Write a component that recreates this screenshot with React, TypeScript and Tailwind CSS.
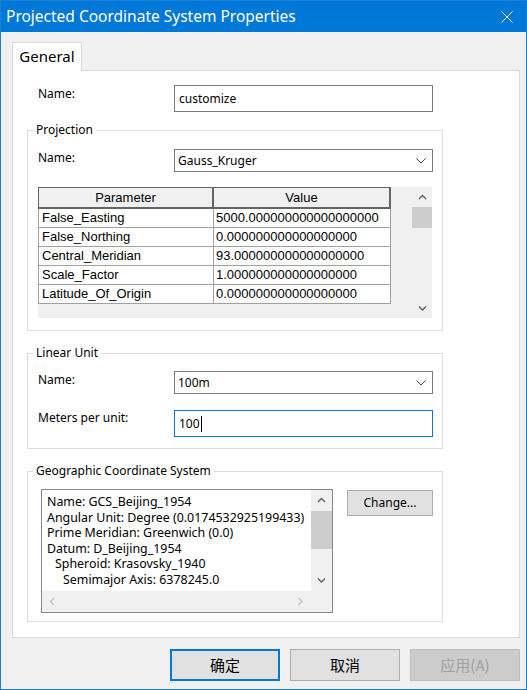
import React from "react";

const ui = "font-['Noto_Sans','Noto_Sans_CJK_SC',sans-serif]";
const arial = "font-['Liberation_Sans',Arial,sans-serif]";

const params = [
  ["False_Easting", "5000.000000000000000000"],
  ["False_Northing", "0.000000000000000000"],
  ["Central_Meridian", "93.000000000000000000"],
  ["Scale_Factor", "1.000000000000000000"],
  ["Latitude_Of_Origin", "0.000000000000000000"],
];

const gcsLines: Array<{ text: string; indent: string }> = [
  { text: "Name: GCS_Beijing_1954", indent: "pl-[5px]" },
  { text: "Angular Unit: Degree (0.0174532925199433)", indent: "pl-[5px]" },
  { text: "Prime Meridian: Greenwich (0.0)", indent: "pl-[5px]" },
  { text: "Datum: D_Beijing_1954", indent: "pl-[5px]" },
  { text: "Spheroid: Krasovsky_1940", indent: "pl-[13px]" },
  { text: "Semimajor Axis: 6378245.0", indent: "pl-[21px]" },
];

function Chevron({ dir, color = "#606060" }: { dir: "up" | "down" | "left" | "right"; color?: string }) {
  const pts = {
    up: "1,5 4.5,1.5 8,5",
    down: "1,1.5 4.5,5 8,1.5",
    left: "5,1 1.5,4.5 5,8",
    right: "1.5,1 5,4.5 1.5,8",
  }[dir];
  const size = dir === "up" || dir === "down" ? { w: 9, h: 7 } : { w: 7, h: 9 };
  return (
    <svg width={size.w} height={size.h} viewBox={`0 0 ${size.w} ${size.h}`}>
      <polyline points={pts} fill="none" stroke={color} strokeWidth="1.4" />
    </svg>
  );
}

function DropChevron() {
  return (
    <svg width="10" height="6" viewBox="0 0 10 6">
      <polyline points="0.5,0.5 5,5 9.5,0.5" fill="none" stroke="#444" strokeWidth="1" />
    </svg>
  );
}

function Select({ value }: { value: string }) {
  return (
    <div className="flex h-[23px] w-[259px] items-center justify-between border border-[#7a7a7a] bg-white pl-[3px] pr-[6px] text-[12px] text-black">
      <span>{value}</span>
      <DropChevron />
    </div>
  );
}

// groupbox: border notch comes from the legend, padding lives on the inner div
function GroupBox({ title, className, children }: { title: string; className: string; children: React.ReactNode }) {
  return (
    <fieldset className="w-[416px] border border-[#dcdcdc] p-0">
      <legend className="ml-[5px] px-[3px] text-[12px] leading-[16px] text-black">{title}</legend>
      <div className={className}>{children}</div>
    </fieldset>
  );
}

export default function App() {
  return (
    <div className={`flex h-[690px] w-[527px] flex-col overflow-hidden border border-[#1b7fd6] bg-[#f0f0f0] ${ui}`}>
      <div className="flex h-[31px] shrink-0 items-center justify-between bg-[#0078d7] pl-[5px] pr-[13px] text-[15.5px] text-white">
        <span>Projected Coordinate System Properties</span>
        <svg width="12" height="12" viewBox="0 0 12 12">
          <path d="M0.5 0.5 L11.5 11.5 M11.5 0.5 L0.5 11.5" stroke="#fff" strokeWidth="1" />
        </svg>
      </div>

      <div className="flex flex-1 flex-col pl-[11px] pr-[6px]">
        <div className="mt-[10px] flex">
          <div className="relative z-10 -mb-px flex h-[29px] w-[70px] items-center justify-center border border-b-0 border-[#d9d9d9] bg-white pb-[1px] text-[15px] text-black">
            General
          </div>
        </div>

        <div className="h-[568px] border border-[#d9d9d9] bg-white pl-[14px]">
          <div className="mt-[14px] mb-[10px] flex items-start">
            <span className="mt-[1px] w-[147px] pl-[11px] text-[12px] leading-[16px]">Name:</span>
            <div className="flex h-[27px] w-[259px] items-center border border-[#7a7a7a] pl-[4px] text-[12px]">customize</div>
          </div>

          <GroupBox title="Projection" className="pb-[12px] pl-[10px] pr-[9px] pt-[11px]">
            <div className="flex items-start">
              <span className="mt-[1px] w-[136px] text-[12px] leading-[16px]">Name:</span>
              <Select value="Gauss_Kruger" />
            </div>

            <div className="mt-[15px] flex h-[131px] w-[394px] bg-[#f0f0f0]">
              <div className={`flex w-[353px] flex-col text-[13px] text-black ${arial}`}>
                <div className="flex h-[22px] border-l border-t border-[#646464] bg-[#f0f0f0]">
                  <div className="flex w-[175px] items-center justify-center border-b-2 border-r-2 border-[#646464]">Parameter</div>
                  <div className="flex w-[177px] items-center justify-center border-b-2 border-r-2 border-[#646464]">Value</div>
                </div>
                {params.map(([k, v]) => (
                  <div key={k} className="flex h-[19px] bg-white">
                    <div className="flex w-[176px] items-center border-b border-l border-r border-[#a0a0a0] pl-[3px]">{k}</div>
                    <div className="flex w-[177px] items-center border-b border-r border-[#a0a0a0] pl-[2px]">{v}</div>
                  </div>
                ))}
              </div>
              <div className="ml-auto flex w-[20px] flex-col">
                <div className="flex h-[20px] items-center justify-center">
                  <Chevron dir="up" />
                </div>
                <div className="h-[21px] bg-[#cdcdcd]" />
                <div className="flex-1" />
                <div className="flex h-[20px] items-center justify-center">
                  <Chevron dir="down" />
                </div>
              </div>
            </div>
          </GroupBox>

          <div className="h-[14px]" />

          <GroupBox title="Linear Unit" className="pb-[11px] pl-[10px] pr-[9px] pt-[10px]">
            <div className="flex items-start">
              <span className="mt-[1px] w-[136px] text-[12px] leading-[16px]">Name:</span>
              <Select value="100m" />
            </div>
            <div className="mt-[16px] flex items-start">
              <span className="w-[136px] text-[12px] leading-[16px]">Meters per unit:</span>
              <div className="flex h-[27px] w-[259px] items-center border border-[#0078d7] pl-[4px] text-[12px]">
                100
                <span className="ml-px h-[16px] w-px bg-black" />
              </div>
            </div>
          </GroupBox>

          <div className="h-[14px]" />

          <GroupBox title="Geographic Coordinate System" className="pb-[8px] pl-[13px] pr-[9px] pt-[10px]">
            <div className="flex items-start">
              <div className="flex h-[124px] w-[292px] flex-col border border-[#828790]">
                <div className="flex h-[101px]">
                  <div className="w-[269px] overflow-hidden pt-[4px] text-[12.4px] leading-[15.6px]">
                    {gcsLines.map((l) => (
                      <div key={l.text} className={`whitespace-nowrap ${l.indent}`}>{l.text}</div>
                    ))}
                  </div>
                  <div className="flex w-[21px] flex-col bg-[#f0f0f0]">
                    <div className="flex h-[21px] items-center justify-center">
                      <Chevron dir="up" />
                    </div>
                    <div className="h-[38px] bg-[#cdcdcd]" />
                    <div className="flex-1" />
                    <div className="flex h-[21px] items-center justify-center">
                      <Chevron dir="down" />
                    </div>
                  </div>
                </div>
                <div className="flex h-[21px] bg-[#f0f0f0]">
                  <div className="flex w-[269px] items-center justify-between px-[7px]">
                    <Chevron dir="left" color="#c2c2c2" />
                    <Chevron dir="right" color="#c2c2c2" />
                  </div>
                </div>
              </div>
              <button className="ml-[14px] mt-[1px] h-[26px] w-[86px] border border-[#adadad] bg-[#e1e1e1] text-[12px] text-black">
                Change...
              </button>
            </div>
          </GroupBox>
        </div>

        <div className="mt-[11px] flex justify-end gap-[10px] text-[15px] font-['Noto_Sans_CJK_SC','Noto_Sans',sans-serif]">
          <button className="h-[32px] w-[110px] border-2 border-[#0078d7] bg-[#e1e1e1] text-black">确定</button>
          <button className="h-[32px] w-[110px] border border-[#adadad] bg-[#e1e1e1] text-black">取消</button>
          <button className="h-[32px] w-[110px] border border-[#bfbfbf] bg-[#cccccc] text-[#a0a0a0]">应用(A)</button>
        </div>
      </div>
    </div>
  );
}
